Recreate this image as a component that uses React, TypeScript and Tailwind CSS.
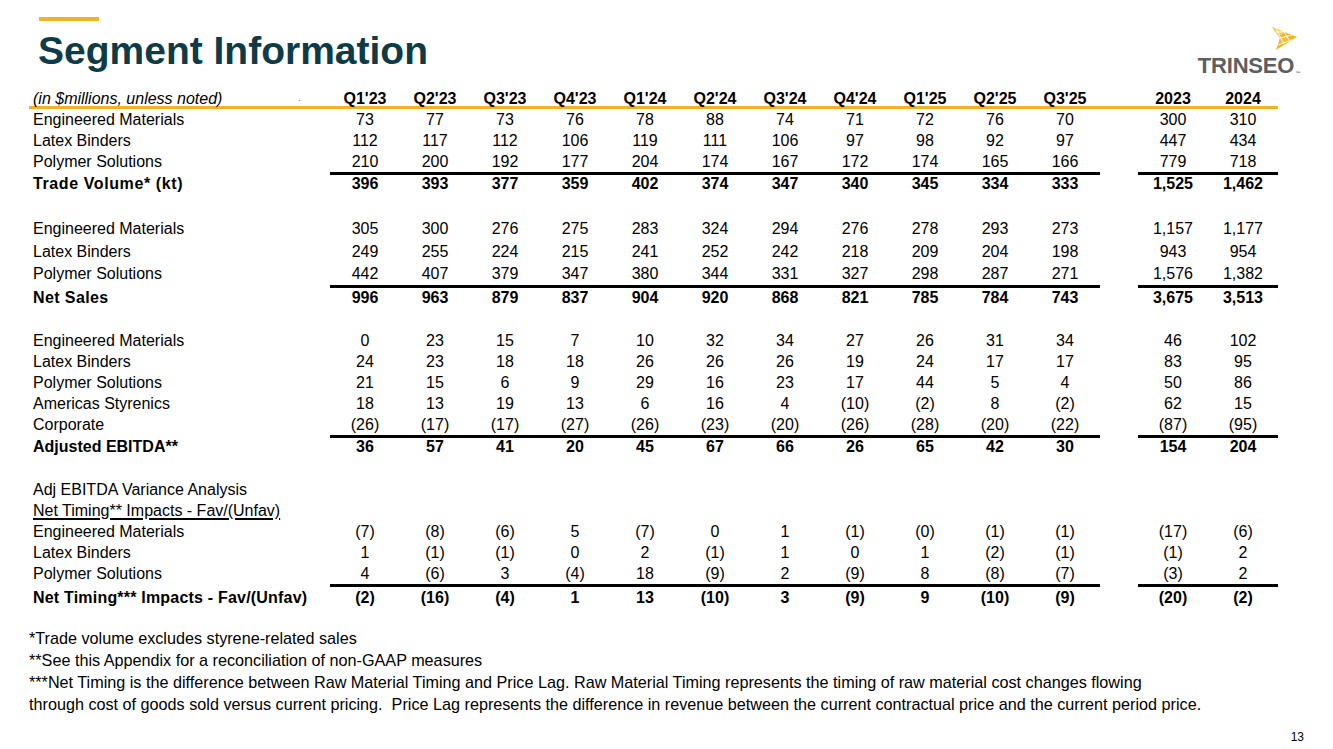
import React from "react";

type RowProps = {
  label: string;
  values?: string[];
  bold?: boolean;
  total?: boolean;
  h?: string;
  labelClass?: string;
};

const cols = "grid grid-cols-[301px_repeat(11,70px)_38px_70px_70px]";

function Row({ label, values = [], bold, total, h = "h-[21px]", labelClass = "" }: RowProps) {
  const quarters = values.slice(0, 11);
  const years = values.slice(11);
  const border = total ? "border-t-[3px]" : "";
  return (
    <div className={`${cols} ${bold ? "font-bold" : ""}`}>
      <div className={`${border} border-transparent pl-[4px] flex items-center whitespace-nowrap ${h} ${labelClass}`}>
        {label}
      </div>
      {Array.from({ length: 11 }).map((_, i) => (
        <div key={i} className={`${border} border-black flex items-center justify-center ${h}`}>
          {quarters[i] ?? ""}
        </div>
      ))}
      <div className={`${border} border-transparent ${h}`} />
      {[0, 1].map((i) => (
        <div key={i} className={`${border} border-black flex items-center justify-center ${h}`}>
          {years[i] ?? ""}
        </div>
      ))}
    </div>
  );
}

const headers = ["Q1'23", "Q2'23", "Q3'23", "Q4'23", "Q1'24", "Q2'24", "Q3'24", "Q4'24", "Q1'25", "Q2'25", "Q3'25"];

function Logo() {
  return (
    <div className="flex flex-col items-end pt-[27px] pr-[33px]">
      <svg width="27" height="23" viewBox="0 0 27 23" className="mr-[2px]">
        <polygon points="1,0 26,10 5,23 9,11" fill="#f2b420" />
        <polygon points="1,0 13,4.8 10,8.5 4,5" fill="#f8cd5c" />
        <polygon points="9,11 17,7.5 19,14.5 7,19" fill="#f5bd35" />
        <g stroke="#ffffff" strokeWidth="0.9" strokeLinecap="round">
          <line x1="4" y1="5" x2="13" y2="4.8" />
          <line x1="9" y1="11" x2="21" y2="8" />
          <line x1="7" y1="18" x2="23" y2="12" />
          <line x1="5" y1="1.6" x2="13" y2="17" />
          <line x1="13" y1="4.8" x2="19" y2="14.5" />
        </g>
      </svg>
      <div className="mt-[5px] flex items-end text-[22px] leading-none font-bold text-[#5d5e60] tracking-[-0.2px]">
        TRINSEO
        <span className="text-[5px] leading-none ml-[1px] mb-[1px]">™</span>
      </div>
    </div>
  );
}

export default function App() {
  return (
    <div className="w-[1333px] h-[749px] bg-white overflow-hidden text-black font-['Liberation_Sans',Arial,sans-serif] text-[16px]">
      <div className="flex justify-between h-[87px]">
        <div className="pt-[17px] pl-[39px]">
          <div className="h-[4px] w-[60px] bg-[#f0b323]" />
          <h1 className="mt-[10px] -ml-[1px] text-[39px] leading-none font-bold text-[#0d3b47]">
            Segment Information
          </h1>
        </div>
        <Logo />
      </div>

      <div className="ml-[29px] w-[1249px]">
        <div className={`${cols} border-b-[3px] border-[#f0b323] h-[22px] font-bold`}>
          <div className="pl-[4px] flex items-center font-normal italic whitespace-nowrap">
            (in $millions, unless noted)
            <span className="ml-[76px] text-[7px] not-italic">.</span>
          </div>
          {headers.map((q) => (
            <div key={q} className="flex items-center justify-center">{q}</div>
          ))}
          <div />
          <div className="flex items-center justify-center">2023</div>
          <div className="flex items-center justify-center">2024</div>
        </div>

        <Row label="Engineered Materials" values={["73", "77", "73", "76", "78", "88", "74", "71", "72", "76", "70", "300", "310"]} />
        <Row label="Latex Binders" values={["112", "117", "112", "106", "119", "111", "106", "97", "98", "92", "97", "447", "434"]} />
        <Row label="Polymer Solutions" values={["210", "200", "192", "177", "204", "174", "167", "172", "174", "165", "166", "779", "718"]} />
        <Row label="Trade Volume* (kt)" bold total h="h-[21px]" labelClass="tracking-[0.6px]" values={["396", "393", "377", "359", "402", "374", "347", "340", "345", "334", "333", "1,525", "1,462"]} />

        <div className="h-[24px]" />
        <Row label="Engineered Materials" h="h-[23px]" values={["305", "300", "276", "275", "283", "324", "294", "276", "278", "293", "273", "1,157", "1,177"]} />
        <Row label="Latex Binders" h="h-[23px]" values={["249", "255", "224", "215", "241", "252", "242", "218", "209", "204", "198", "943", "954"]} />
        <Row label="Polymer Solutions" h="h-[22px]" values={["442", "407", "379", "347", "380", "344", "331", "327", "298", "287", "271", "1,576", "1,382"]} />
        <Row label="Net Sales" bold total h="h-[22px]" labelClass="tracking-[0.4px]" values={["996", "963", "879", "837", "904", "920", "868", "821", "785", "784", "743", "3,675", "3,513"]} />

        <div className="h-[23px]" />
        <Row label="Engineered Materials" values={["0", "23", "15", "7", "10", "32", "34", "27", "26", "31", "34", "46", "102"]} />
        <Row label="Latex Binders" values={["24", "23", "18", "18", "26", "26", "26", "19", "24", "17", "17", "83", "95"]} />
        <Row label="Polymer Solutions" values={["21", "15", "6", "9", "29", "16", "23", "17", "44", "5", "4", "50", "86"]} />
        <Row label="Americas Styrenics" values={["18", "13", "19", "13", "6", "16", "4", "(10)", "(2)", "8", "(2)", "62", "15"]} />
        <Row label="Corporate" values={["(26)", "(17)", "(17)", "(27)", "(26)", "(23)", "(20)", "(26)", "(28)", "(20)", "(22)", "(87)", "(95)"]} />
        <Row label="Adjusted EBITDA**" bold total h="h-[21px]" values={["36", "57", "41", "20", "45", "67", "66", "26", "65", "42", "30", "154", "204"]} />

        <div className="h-[23px]" />
        <Row label="Adj EBITDA Variance Analysis" />
        <Row label="Net Timing** Impacts - Fav/(Unfav)" labelClass="underline decoration-[1.5px] underline-offset-[2px]" />
        <Row label="Engineered Materials" values={["(7)", "(8)", "(6)", "5", "(7)", "0", "1", "(1)", "(0)", "(1)", "(1)", "(17)", "(6)"]} />
        <Row label="Latex Binders" values={["1", "(1)", "(1)", "0", "2", "(1)", "1", "0", "1", "(2)", "(1)", "(1)", "2"]} />
        <Row label="Polymer Solutions" values={["4", "(6)", "3", "(4)", "18", "(9)", "2", "(9)", "8", "(8)", "(7)", "(3)", "2"]} />
        <Row label="Net Timing*** Impacts - Fav/(Unfav)" bold total h="h-[25px]" labelClass="tracking-[0.2px]" values={["(2)", "(16)", "(4)", "1", "13", "(10)", "3", "(9)", "9", "(10)", "(9)", "(20)", "(2)"]} />

        <div className="mt-[18px] text-[16.2px] leading-[22px] whitespace-pre">
          <p>*Trade volume excludes styrene-related sales</p>
          <p>**See this Appendix for a reconciliation of non-GAAP measures</p>
          <p>***Net Timing is the difference between Raw Material Timing and Price Lag. Raw Material Timing represents the timing of raw material cost changes flowing</p>
          <p>through cost of goods sold versus current pricing.  Price Lag represents the difference in revenue between the current contractual price and the current period price.</p>
        </div>
      </div>

      <div className="flex justify-end pr-[29px] mt-[16px] text-[12px] leading-[12px]">13</div>
    </div>
  );
}
